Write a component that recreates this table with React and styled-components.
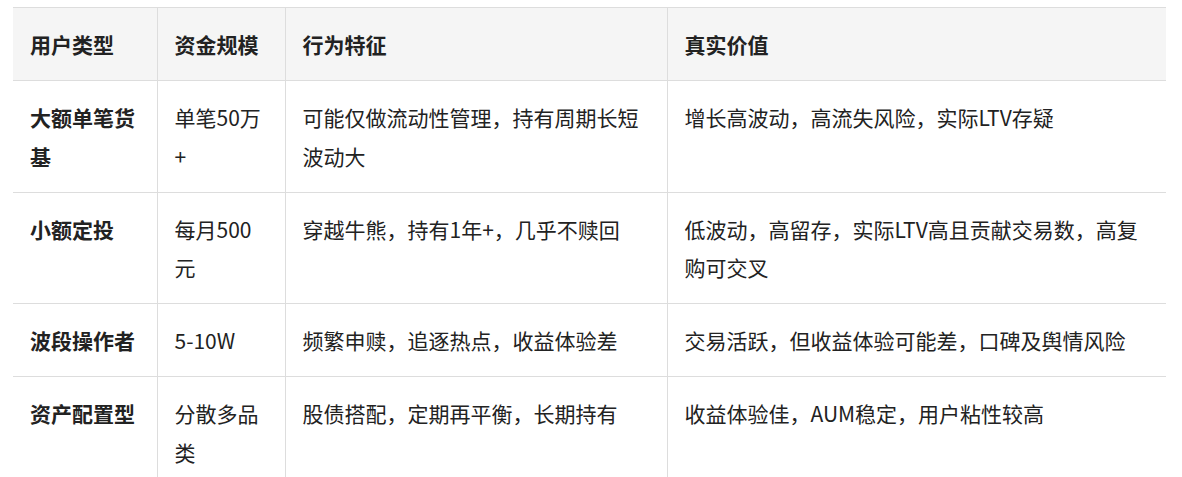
import styled, { createGlobalStyle } from "styled-components"

const GlobalStyle = createGlobalStyle`
    body {
        margin: 0;
        background: #ffffff;
        font-family: "Noto Sans CJK SC", "Noto Sans", sans-serif;
        color: #222222;
    }
`

const columns = [
    { title: '用户类型', width: 144 },
    { title: '资金规模', width: 128 },
    { title: '行为特征', width: 382 },
    { title: '真实价值', width: 499 },
]

const rows = [
    ['大额单笔货基', '单笔50万+', '可能仅做流动性管理，持有周期长短波动大', '增长高波动，高流失风险，实际LTV存疑'],
    ['小额定投', '每月500元', '穿越牛熊，持有1年+，几乎不赎回', '低波动，高留存，实际LTV高且贡献交易数，高复购可交叉'],
    ['波段操作者', '5-10W', '频繁申赎，追逐热点，收益体验差', '交易活跃，但收益体验可能差，口碑及舆情风险'],
    ['资产配置型', '分散多品类', '股债搭配，定期再平衡，长期持有', '收益体验佳，AUM稳定，用户粘性较高'],
]

export default function App() {
    return (
        <>
            <GlobalStyle />
            <Page>
                <Table>
                    <colgroup>
                        {columns.map(col => <col key={col.title} style={{ width: col.width }} />)}
                    </colgroup>
                    <thead>
                        <tr>
                            {columns.map(col => <HeadCell key={col.title}>{col.title}</HeadCell>)}
                        </tr>
                    </thead>
                    <tbody>
                        {rows.map(row => (
                            <tr key={row[0]}>
                                {row.map((text, i) => (
                                    <Cell key={i} $bold={i === 0}>{text}</Cell>
                                ))}
                            </tr>
                        ))}
                    </tbody>
                </Table>
            </Page>
        </>
    )
}

const Page = styled.div`
    padding: 7px 0 0 13px;
`

const Table = styled.table`
    width: 1153px;
    table-layout: fixed;
    border-collapse: collapse;
    border-top: 1px solid #dddddd;
    font-size: 21px;
    line-height: 38.5px;
`

const HeadCell = styled.th`
    padding: 17px 17px 16.5px 17px;
    text-align: left;
    vertical-align: top;
    font-weight: 700;
    background: #f5f5f5;
    border-bottom: 1px solid #dddddd;
    &:not(:first-child){
        border-left: 1px solid #dddddd;
    }
`

const Cell = styled.td`
    padding: 17px 17px 16.5px 17px;
    vertical-align: top;
    font-weight: ${props => props.$bold ? 700 : 400};
    border-bottom: 1px solid #dddddd;
    &:not(:first-child){
        border-left: 1px solid #dddddd;
    }
`
